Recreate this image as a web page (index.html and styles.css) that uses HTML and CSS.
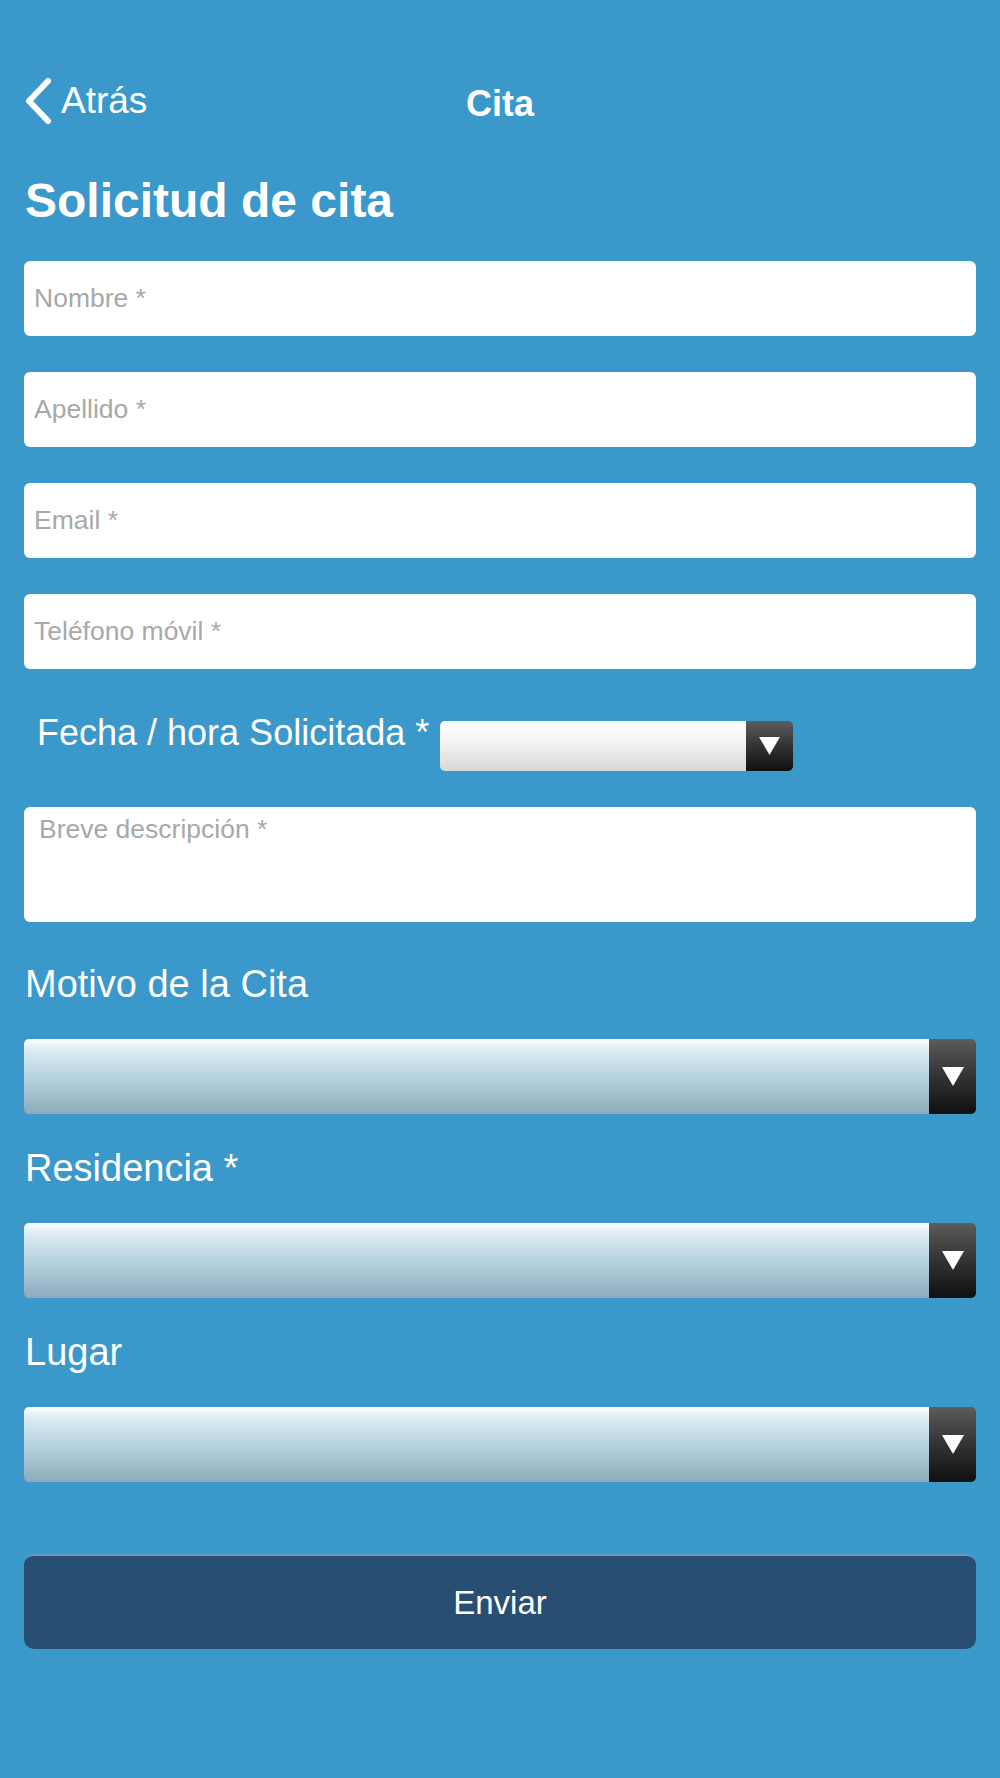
FILE: index.html
```html
<!DOCTYPE html>
<html lang="es">
<head>
  <meta charset="UTF-8">
  <title>Cita</title>
  <link rel="stylesheet" href="styles.css">
</head>
<body>

<div class="topbar">
  <a class="back" href="#">
    <svg width="30" height="48" viewBox="0 0 30 48">
      <polyline points="25,4 6,24 25,44" fill="none" stroke="#fff" stroke-width="6" stroke-linecap="round" stroke-linejoin="round"/>
    </svg>
    <span>Atrás</span>
  </a>
  <div class="title">Cita</div>
  <div></div>
</div>

<h1>Solicitud de cita</h1>

<form class="form" onsubmit="return false">
  <input class="field" type="text" placeholder="Nombre *">
  <input class="field" type="text" placeholder="Apellido *">
  <input class="field" type="email" placeholder="Email *">
  <input class="field" type="tel" placeholder="Teléfono móvil *">

  <div class="date-row">
    <label>Fecha / hora Solicitada *</label>
    <div class="select select-small">
      <select></select>
      <span class="arrow">
        <svg width="22" height="19" viewBox="0 0 22 19"><polygon points="0,0 22,0 11,19" fill="#fff"/></svg>
      </span>
    </div>
  </div>

  <textarea class="field area" placeholder="Breve descripción *"></textarea>

  <label class="label first">Motivo de la Cita</label>
  <div class="select">
    <select></select>
    <span class="arrow">
      <svg width="22" height="19" viewBox="0 0 22 19"><polygon points="0,0 22,0 11,19" fill="#fff"/></svg>
    </span>
  </div>

  <label class="label">Residencia *</label>
  <div class="select">
    <select></select>
    <span class="arrow">
      <svg width="22" height="19" viewBox="0 0 22 19"><polygon points="0,0 22,0 11,19" fill="#fff"/></svg>
    </span>
  </div>

  <label class="label">Lugar</label>
  <div class="select">
    <select></select>
    <span class="arrow">
      <svg width="22" height="19" viewBox="0 0 22 19"><polygon points="0,0 22,0 11,19" fill="#fff"/></svg>
    </span>
  </div>

  <button class="send" type="submit">Enviar</button>
</form>

</body>
</html>
```

FILE: styles.css
```css
body {
  margin: 0;
  background: #3a98ca;
  font-family: 'Liberation Sans', Arial, sans-serif;
  color: #fff;
}

.topbar {
  display: grid;
  grid-template-columns: 1fr auto 1fr;
  align-items: center;
  height: 90px;
  margin-top: 56px;
  padding: 0 23px;
}

.back {
  display: flex;
  align-items: center;
  gap: 8px;
  color: #fff;
  text-decoration: none;
  font-size: 37px;
}

.back svg {
  display: block;
}

.title {
  padding-top: 6px;
  font-size: 36px;
  font-weight: bold;
}

h1 {
  margin: 27px 0 0;
  padding-left: 25px;
  font-size: 48px;
  line-height: 55px;
  font-weight: bold;
}

.form {
  display: flex;
  flex-direction: column;
  padding: 33px 24px 0;
}

.field {
  height: 75px;
  margin: 0 0 36px;
  padding: 0 10px;
  border: none;
  border-radius: 6px;
  background: #fff;
  font-family: inherit;
  font-size: 26.5px;
  box-sizing: border-box;
}

.field::placeholder {
  color: #a8a8a8;
}

.date-row {
  display: flex;
  align-items: flex-start;
  margin: 8px 0 36px;
}

.date-row label {
  padding-left: 13px;
  font-size: 36px;
  line-height: 40px;
}

.area {
  height: 115px;
  margin: 0;
  padding: 7px 15px;
  line-height: 30px;
  resize: none;
}

.label {
  margin-top: 33px;
  font-size: 38px;
  line-height: 42px;
  padding-left: 1px;
}

.label.first {
  margin-top: 41px;
}

.select {
  display: flex;
  height: 75px;
  margin-top: 34px;
  border-radius: 5px;
  overflow: hidden;
}

.select select {
  flex: 1;
  border: none;
  appearance: none;
  -webkit-appearance: none;
  background: linear-gradient(#fdfeff 0%, #deedf5 14%, #b6d3e0 50%, #8eaabb 100%);
}

.arrow {
  display: flex;
  align-items: center;
  justify-content: center;
  width: 47px;
  background: linear-gradient(#5c5c5c 0%, #333 50%, #0f0f0f 100%);
}

.select-small {
  width: 353px;
  height: 50px;
  margin: 8px 0 0 11px;
}

.select-small select {
  background: linear-gradient(#fff 0%, #f2f2f2 45%, #d6d6d6 100%);
}

.select-small .arrow {
  width: 47px;
}

.select-small .arrow svg {
  width: 21px;
  height: 18px;
}

.send {
  height: 95px;
  margin-top: 72px;
  border: none;
  border-top: 2px solid #6b9bc2;
  border-radius: 10px;
  background: #284f72;
  color: #fff;
  font-family: inherit;
  font-size: 33px;
  cursor: pointer;
}
```
